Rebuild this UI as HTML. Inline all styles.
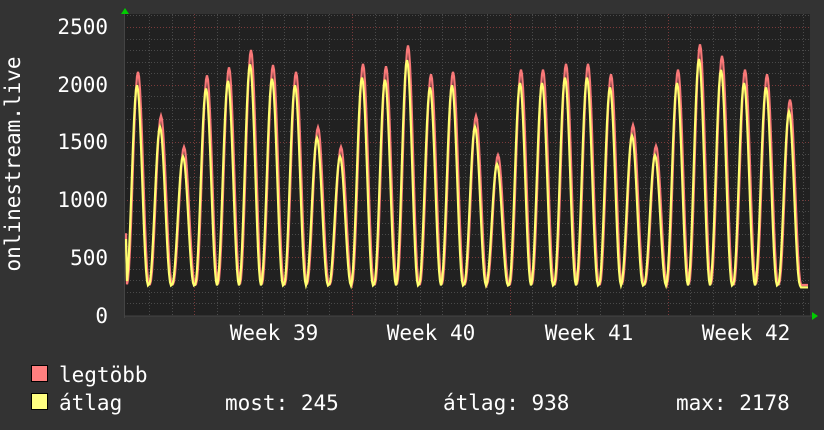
<!DOCTYPE html>
<html><head><meta charset="utf-8"><style>
html,body{margin:0;padding:0;background:#333;width:824px;height:430px;overflow:hidden}
svg text{font-family:"DejaVu Sans Mono","Liberation Mono",monospace;fill:#fff}
</style></head><body>
<svg id="g" width="824" height="430" xmlns="http://www.w3.org/2000/svg">
<rect x="0" y="0" width="824" height="430" fill="#333"/>
<rect x="124" y="14" width="686" height="302" fill="#212121"/>
<g id="grid"></g>
<polyline id="red" fill="none" stroke="#f87878" stroke-width="2.2"/>
<polyline id="yel" fill="none" stroke="#ffff70" stroke-width="2.2"/>
<line x1="124" y1="316" x2="812" y2="316" stroke="#444" stroke-width="1"/>
<line x1="124.5" y1="14" x2="124.5" y2="318" stroke="#444" stroke-width="1"/>
<polygon points="121,14 125,8 129,14" fill="#0c0"/>
<polygon points="812,312 818,316 812,320" fill="#0c0"/>
<g font-size="21">
<text x="108" y="34" text-anchor="end">2500</text>
<text x="108" y="92" text-anchor="end">2000</text>
<text x="108" y="149" text-anchor="end">1500</text>
<text x="108" y="207" text-anchor="end">1000</text>
<text x="108" y="265" text-anchor="end">500</text>
<text x="108" y="323" text-anchor="end">0</text>
<text x="20" y="164" text-anchor="middle" transform="rotate(-90 20 164)">onlinestream.live</text>
<text x="274" y="340" text-anchor="middle">Week 39</text>
<text x="431" y="340" text-anchor="middle">Week 40</text>
<text x="589" y="340" text-anchor="middle">Week 41</text>
<text x="746" y="340" text-anchor="middle">Week 42</text>
<text x="59" y="382">legtöbb</text>
<text x="59" y="410">átlag</text>
<text x="225" y="410">most: 245</text>
<text x="443" y="410">átlag: 938</text>
<text x="676" y="410">max: 2178</text>
</g>
<rect x="31.5" y="365.5" width="16" height="16" fill="#ff7f7f" stroke="#000"/>
<rect x="31.5" y="393.5" width="16" height="16" fill="#ffff80" stroke="#000"/>
</svg>
<script>
var ns="http://www.w3.org/2000/svg",grid=document.getElementById('grid');
function ln(x1,y1,x2,y2,c){var l=document.createElementNS(ns,'line');l.setAttribute('x1',x1);l.setAttribute('y1',y1);l.setAttribute('x2',x2);l.setAttribute('y2',y2);l.setAttribute('stroke',c);l.setAttribute('stroke-width',1);l.setAttribute('stroke-dasharray','1,2');grid.appendChild(l);}
function Y(v){return 315-v*0.1152;}
for(var v=100;v<=2600;v+=100){var y=Math.round(Y(v))+0.5;ln(124,y,810,y,v%500==0?'#7a3a3a':'#4a4a4a');}
for(var i=0;i<31;i++){var x=Math.round(149+i*22.55)+0.5;if(x>810)break;var major=((i-2)%7==0);ln(x,14,x,316,major?'#7a3a3a':'#4a4a4a');}
var peaks=[[138,2110],[161,1730],[184,1460],[207,2080],[229,2150],[251,2300],[273,2170],[296,2110],[318,1630],[341,1460],[363,2180],[386,2160],[408,2340],[431,2090],[453,2110],[476,1730],[498,1390],[521,2130],[543,2130],[566,2180],[588,2180],[611,2090],[633,1650],[656,1470],[678,2130],[700,2350],[722,2250],[745,2130],[767,2090],[790,1870]];
var r=[],ye=[];
for(var x=125;x<=808;x++){var p=null;
 for(var k=0;k<peaks.length;k++){var d=Math.abs(x-peaks[k][0]);if(d<=11.3){p=peaks[k];}}
 var base=265,pk=p?p[1]:300,d=p?x-p[0]:11;
 var ph=Math.cos(Math.PI*d/11.3);var f=Math.pow((1+ph)/2,1.1);
 var vr=base+(pk-base)*f;var vy=base-10+(pk*0.95-base)*Math.pow((1+Math.cos(Math.PI*(d+1)/11.3))/2,1.1);
 if(x<127){vr=700;vy=650;}
 if(x>800){vr=260;vy=240;}
 r.push(x+','+Y(vr).toFixed(1));ye.push(x+','+Y(vy).toFixed(1));}
document.getElementById('red').setAttribute('points',r.join(' '));
document.getElementById('yel').setAttribute('points',ye.join(' '));
</script>
</body></html>
